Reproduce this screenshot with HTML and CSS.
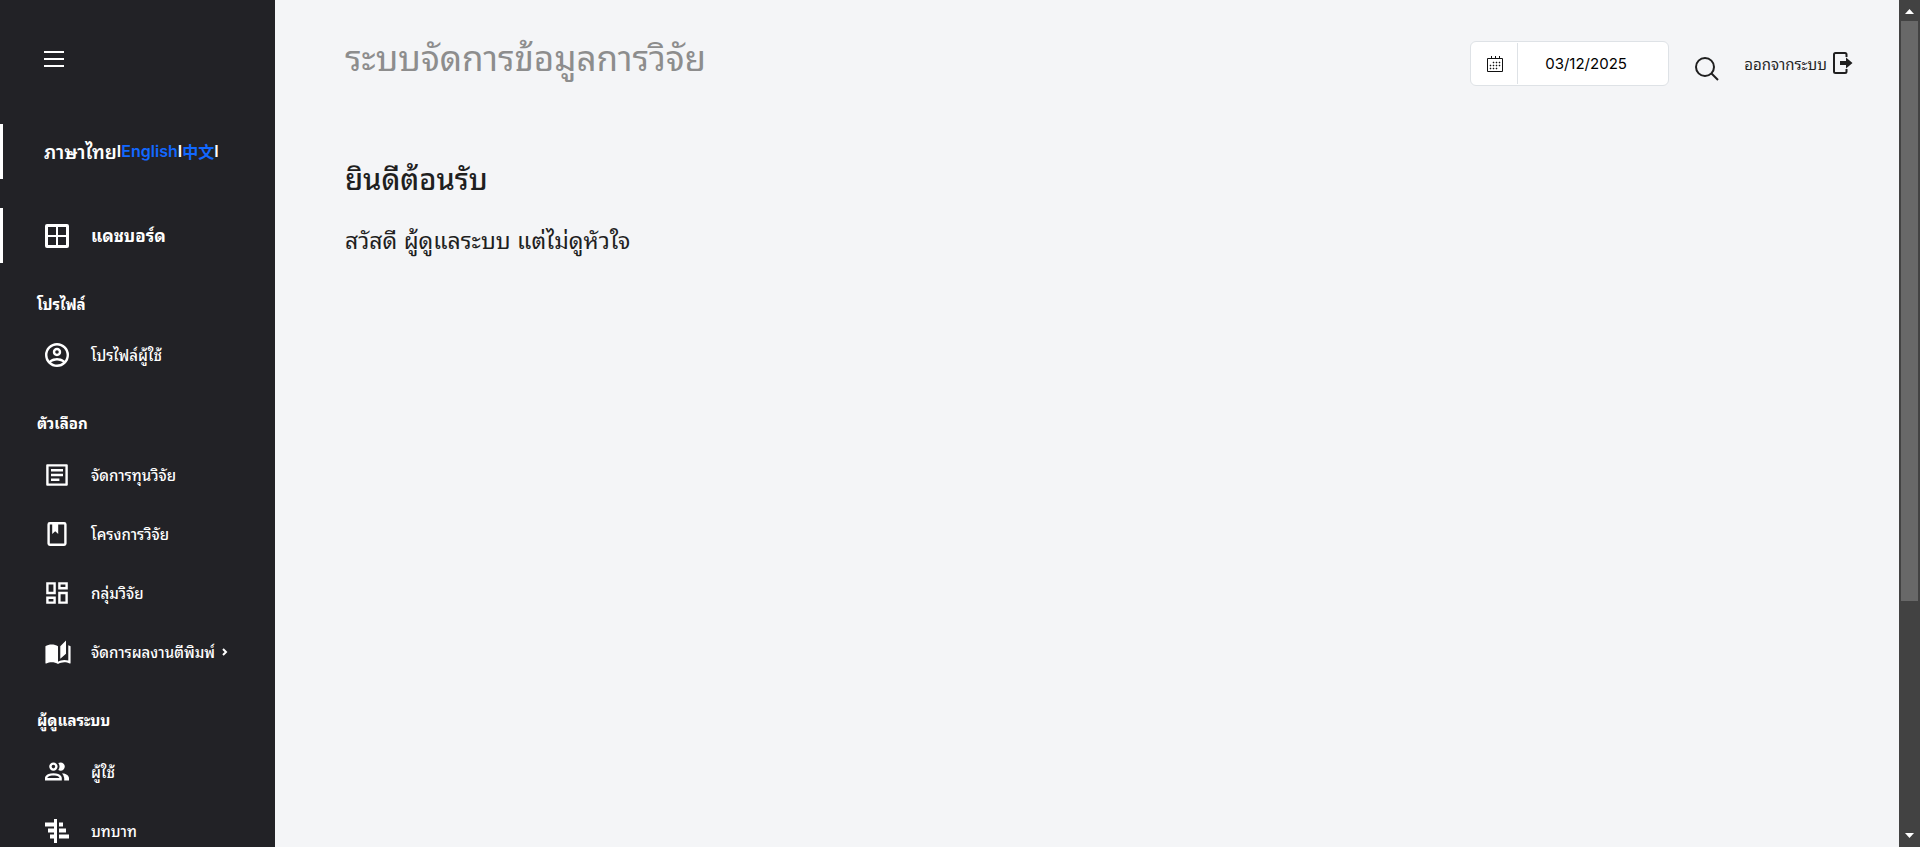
FILE: index.html
```html
<!DOCTYPE html>
<html lang="th">
<head>
<meta charset="utf-8">
<title>ระบบจัดการข้อมูลการวิจัย</title>
<link rel="stylesheet" href="styles.css">
</head>
<body>
<div class="app">
  <nav class="sidebar">
    <button class="menu-toggle" type="button" aria-label="เมนู">
      <svg width="20" height="18" viewBox="0 0 20 18" stroke="#fff" stroke-width="2"><path d="M0 2h20M0 9h20M0 16h20"/></svg>
    </button>
    <div class="languages"><span class="current">ภาษาไทย</span>I<a href="#en">English</a>I<a href="#zh">中文</a>I</div>
    <a class="nav-link active" href="#dashboard">
      <svg class="icon" viewBox="0 0 24 24"><path fill-rule="evenodd" d="M2 0h20a2 2 0 0 1 2 2v20a2 2 0 0 1-2 2H2a2 2 0 0 1-2-2V2a2 2 0 0 1 2-2M3 3v8h8V3zM13 3v8h8V3zM3 13v8h8v-8zM13 13v8h8v-8z"/></svg>
      <span>แดชบอร์ด</span>
    </a>
    <h2 class="nav-heading">โปรไฟล์</h2>
    <a class="nav-link" href="#profile">
      <svg class="icon" viewBox="2 2 20 20"><path d="M12 2A10 10 0 0 0 2 12a10 10 0 0 0 10 10 10 10 0 0 0 10-10A10 10 0 0 0 12 2M7.07 18.28c.43-.9 3.05-1.78 4.93-1.78s4.5.88 4.93 1.78A7.893 7.893 0 0 1 12 20c-1.86 0-3.57-.64-4.93-1.72m11.29-1.45c-1.43-1.74-4.9-2.33-6.36-2.33s-4.93.59-6.36 2.33A7.928 7.928 0 0 1 4 12c0-4.41 3.59-8 8-8s8 3.59 8 8c0 1.82-.62 3.5-1.64 4.83M12 6c-1.94 0-3.5 1.56-3.5 3.5S10.06 13 12 13s3.5-1.56 3.5-3.5S13.94 6 12 6m0 5a1.5 1.5 0 0 1-1.5-1.5A1.5 1.5 0 0 1 12 8a1.5 1.5 0 0 1 1.5 1.5A1.5 1.5 0 0 1 12 11Z"/></svg>
      <span>โปรไฟล์ผู้ใช้</span>
    </a>
    <h2 class="nav-heading">ตัวเลือก</h2>
    <a class="nav-link" href="#funds">
      <svg class="icon" viewBox="2 2 20 20"><path d="M19 5v14H5V5h14m1.1-2H3.9c-.5 0-.9.4-.9.9v16.2c0 .4.4.9.9.9h16.2c.4 0 .9-.5.9-.9V3.9c0-.5-.5-.9-.9-.9M11 7h6v2h-6V7m0 4h6v2h-6v-2m0 4h3v2h-3v-2M7 7h4v2H7V7m0 4h4v2H7v-2m0 4h4v2H7v-2Z"/></svg>
      <span>จัดการทุนวิจัย</span>
    </a>
    <a class="nav-link" href="#projects">
      <svg class="icon" viewBox="2 2 20 20"><path d="M18 2a2 2 0 0 1 2 2v16a2 2 0 0 1-2 2H6a2 2 0 0 1-2-2V4a2 2 0 0 1 2-2h12m0 2h-5v8l-2.500-2.250L8 12V4H6v16h12V4Z"/></svg>
      <span>โครงการวิจัย</span>
    </a>
    <a class="nav-link" href="#groups">
      <svg class="icon" viewBox="2 2 20 20"><path d="M19 5v2h-4V5h4M9 5v6H5V5h4m10 8v6h-4v-6h4M9 17v2H5v-2h4M21 3h-8v6h8V3M11 3H3v10h8V3m10 8h-8v10h8V11m-10 4H3v6h8v-6Z"/></svg>
      <span>กลุ่มวิจัย</span>
    </a>
    <a class="nav-link" href="#publications">
      <svg class="icon wide" viewBox="1 .5 22 21"><path d="m19 1-5 5v11l5-4.500V1M1 6v14.650c0 .25.25.5.5.5.1 0 .15-.05.25-.05C3.100 20.450 5.050 20 6.500 20c1.950 0 4.050.4 5.500 1.500V6c-1.450-1.100-3.550-1.500-5.500-1.500S2.450 4.900 1 6m22 13.500V6c-.6-.45-1.250-.75-2-1v13.500c-1.100-.35-2.300-.5-3.500-.5-1.700 0-4.150.65-5.500 1.500v2c1.350-.85 3.800-1.500 5.500-1.500 1.650 0 3.350.3 4.750 1.050.1.050.15.050.25.050.25 0 .5-.25.5-.5v-1.100Z"/></svg>
      <span>จัดการผลงานตีพิมพ์</span>
      <svg class="chevron" width="6" height="8" viewBox="0 0 6 8" fill="none" stroke="#fff" stroke-width="2"><path d="m1 1 3 3-3 3"/></svg>
    </a>
    <h2 class="nav-heading">ผู้ดูแลระบบ</h2>
    <a class="nav-link" href="#users">
      <svg class="icon" viewBox="2 2 20 20"><path d="M13.070 10.410a5 5 0 0 0 0-5.820A3.390 3.390 0 0 1 15 4a3.500 3.500 0 0 1 0 7 3.390 3.390 0 0 1-1.930-.59M5.500 7.500A3.500 3.500 0 1 1 9 11a3.500 3.500 0 0 1-3.500-3.500m2 0A1.500 1.500 0 1 0 9 6a1.500 1.500 0 0 0-1.500 1.500M16 17v2H2v-2s0-4 7-4 7 4 7 4m-2 0c-.14-.78-1.330-2-5-2s-4.930 1.310-5 2m11.950-4A5.320 5.320 0 0 1 18 17v2h4v-2s0-3.630-6.060-4Z"/></svg>
      <span>ผู้ใช้</span>
    </a>
    <a class="nav-link" href="#roles">
      <svg class="icon" viewBox="0 0 24 24"><path d="M9 0h3v24H9zM0 3.500h9v4H0zM3 9.500h6v4H3zM5 15.500h4v4H5zM14 3.500h4v4h-4zM14 9.500h7v4h-7zM14 15.500h10v4H14z"/></svg>
      <span>บทบาท</span>
    </a>
  </nav>

  <main class="content">
    <header class="topbar">
      <h1 class="title">ระบบจัดการข้อมูลการวิจัย</h1>
      <div class="tools">
        <div class="date-picker">
          <label class="date-icon" for="date" aria-label="วันที่">
            <svg width="16" height="16" viewBox="0 0 16 16"><path d="M.5 2.500h15v13H.5z" fill="none" stroke="#111"/><path d="M4.500 0v3M8.500 0v3M12.500 0v3" stroke="#111" fill="none"/><path d="M6 6h1v1H6zM9 6h1v1H9zM12 6h1v1h-1zM3 9h1v1H3zM6 9h1v1H6zM9 9h1v1H9zM12 9h1v1h-1zM3 12h1v1H3zM6 12h1v1H6zM9 12h1v1H9z" fill="#111" stroke="#111" stroke-width=".5"/></svg>
          </label>
          <input id="date" class="date-input" type="text" value="03/12/2025">
        </div>
        <button class="search" type="button" aria-label="ค้นหา">
          <svg width="24" height="24" viewBox="0 0 24 24" fill="none" stroke="#1f1f1f" stroke-width="2"><circle cx="10" cy="10" r="9"/><path d="m16.500 16.500 6.500 6.500"/></svg>
        </button>
        <a class="logout" href="#logout">ออกจากระบบ
          <svg width="20" height="22" viewBox="0 0 20 22"><path d="M13.500 5V2.500A1.500 1.500 0 0 0 12 1H2.500A1.500 1.500 0 0 0 1 2.500v17A1.500 1.500 0 0 0 2.500 21H12a1.500 1.500 0 0 0 1.500-1.500V17" fill="none" stroke="#1f1f1f" stroke-width="2"/><path d="M7 9h6V5.500l6.500 5.500-6.500 5.500V13H7z" fill="#1f1f1f"/></svg>
        </a>
      </div>
    </header>
    <h2 class="welcome">ยินดีต้อนรับ</h2>
    <p class="greeting">สวัสดี ผู้ดูแลระบบ แต่ไม่ดูหัวใจ</p>
  </main>

  <div class="scrollbar" aria-hidden="true">
    <svg width="9" height="5" viewBox="0 0 9 5" fill="#fff"><path d="M4.500 0 9 5H0z"/></svg>
    <div class="track"><div class="thumb"></div></div>
    <svg width="9" height="5" viewBox="0 0 9 5" fill="#fff"><path d="M0 0h9L4.500 5z"/></svg>
  </div>
</div>
</body>
</html>
```
FILE: styles.css
```css
* { box-sizing: border-box; }

body {
  margin: 0;
  background: #f4f5f7;
  color: #1f1f1f;
  font-family: Inter, "Noto Sans Thai Looped", "Noto Looped Thai", Loma, "Noto Sans Thai", "Noto Sans", "Noto Sans CJK SC", sans-serif;
}

h1, h2, p { margin: 0; }
a { text-decoration: none; }
button { border: 0; padding: 0; background: none; cursor: pointer; }
svg { display: block; flex: none; }

.app {
  display: flex;
  height: 100vh;
  overflow: hidden;
}

.sidebar {
  flex: 0 0 275px;
  background: #222226;
  color: #fff;
  overflow: hidden;
}

.menu-toggle { display: block; margin: 50px 44px 56px; }

.languages {
  display: flex;
  align-items: center;
  height: 55px;
  margin-bottom: 29px;
  padding: 0 0 2px 41px;
  border-left: 3px solid #fff;
  font-size: 16px;
  font-weight: 600;
}
.languages .current { font-size: 19px; }
.languages a { color: #1268ff; }

.nav-link {
  display: flex;
  align-items: center;
  height: 55px;
  margin-bottom: 4px;
  padding-left: 45px;
  color: #fff;
  font-size: 15px;
  font-weight: 500;
  white-space: nowrap;
}
.nav-link.active {
  padding-left: 42px;
  border-left: 3px solid #fff;
  font-size: 17px;
  font-weight: 700;
}
.nav-link span { padding-bottom: 2px; }
.icon { width: 24px; height: 24px; margin-right: 22px; fill: #fff; }
.icon.wide { width: 28px; margin: 0 19px 0 -1px; }
.chevron { margin-left: 7px; }

.nav-heading {
  margin: 30px 0 11px 37px;
  font-size: 15px;
  font-weight: 700;
  line-height: 24px;
}
.active + .nav-heading { margin-bottom: 10px; }

.content { flex: 1; padding: 32px 46px 0 70px; }

.topbar {
  display: flex;
  justify-content: space-between;
  align-items: flex-start;
  margin-bottom: 71px;
}
.title {
  color: #8d8d8d;
  font-size: 35px;
  font-weight: 400;
  line-height: 52px;
}
.tools { display: flex; align-items: flex-start; padding-top: 9px; }

.date-picker {
  display: flex;
  width: 199px;
  height: 45px;
  margin-right: 26px;
  padding: 1px;
  border: 1px solid #dee2e6;
  border-radius: 6px;
  background: #fff;
}
.date-icon {
  display: grid;
  place-items: center;
  width: 46px;
  border-right: 1px solid #dee2e6;
}
.date-input {
  flex: 1;
  min-width: 0;
  padding: 0 0 0 27px;
  border: 0;
  background: none;
  color: #000;
  font: 400 15px Inter, sans-serif;
}
.search { margin: 16px 25px 0 0; }
.logout {
  display: flex;
  align-items: center;
  gap: 6px;
  height: 43px;
  color: #1f1f1f;
  font-size: 15px;
}

.welcome { font-size: 29px; font-weight: 500; line-height: 46px; }
.greeting { margin-top: 20px; font-size: 23px; line-height: 36px; }

.scrollbar {
  display: flex;
  flex: 0 0 21px;
  flex-direction: column;
  align-items: center;
  gap: 7px;
  padding: 9px 0;
  background: #424242;
}
.track { flex: 1; }
.thumb { width: 17px; height: 72%; background: #686868; }
```
